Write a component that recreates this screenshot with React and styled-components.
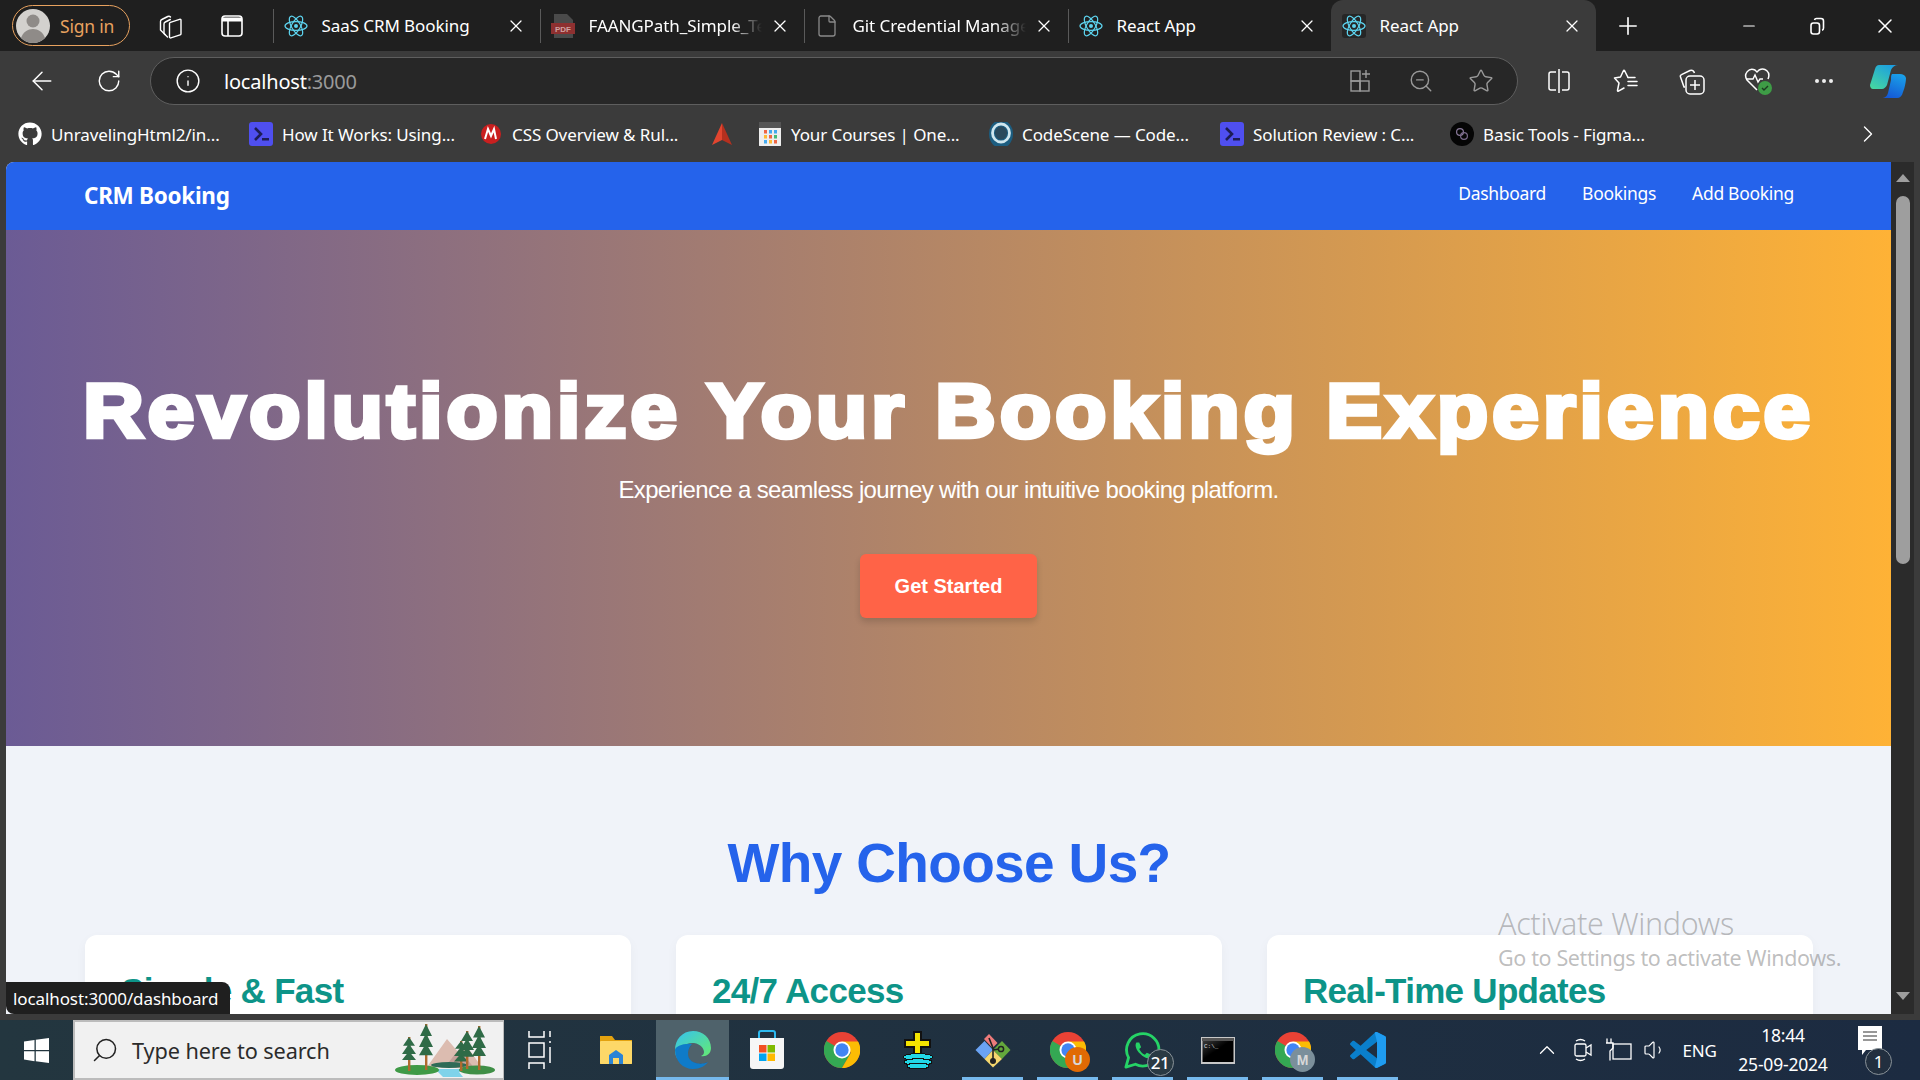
import React from "react";
import styled, { createGlobalStyle } from "styled-components";
import { ArrowLeft, RotateCw, Info, Star, ZoomOut, Plus, Minus, X, ChevronRight, ChevronUp, Search, Volume1, File } from "lucide-react";
import { FaGithub } from "react-icons/fa";

const Global = createGlobalStyle`
  html, body { margin: 0; padding: 0; width: 1920px; height: 1080px; overflow: hidden; background: #3b3b3b; }
  #root { width: 1920px; height: 1080px; }
  * { box-sizing: border-box; }
`;
const UI = `"Noto Sans", "Open Sans", sans-serif`;
const WEB = `"Liberation Sans", Arial, sans-serif`;

const Screen = styled.div`
  width: 1920px; height: 1080px; display: flex; flex-direction: column; font-family: ${UI}; color: #fff; overflow: hidden;
`;
const TabStrip = styled.div`
  height: 51px; background: #1f1f1f; display: flex; align-items: center; padding-left: 12px; flex: none;
`;
const SignIn = styled.div`
  width: 118px; height: 41px; border: 1.5px solid #e8a25f; border-radius: 21px; display: flex; align-items: center; gap: 10px;
  padding-left: 3px; color: #e8a25f; font-size: 17.5px; letter-spacing: -0.2px;
`;
const Avatar = styled.svg`width: 34px; height: 34px; flex: none;`;
const StripIcon = styled.div`
  width: 62px; height: 41px; display: flex; align-items: center; justify-content: center; flex: none;
  margin-left: ${p => p.$ml || 0}px;
`;
const TabsRow = styled.div`display: flex; height: 51px; align-items: center; margin-left: 10px;`;
const Tab = styled.div`
  width: ${p => p.$w || 264}px; height: ${p => p.$active ? 51 : 34}px; display: flex; align-items: center; padding: 0 14px 0 ${p => p.$active ? 11 : 10}px;
  border-left: ${p => p.$active ? "none" : "1px solid #5a5a5a"};
  background: ${p => p.$active ? "#3b3b3b" : "transparent"};
  border-radius: ${p => p.$active ? "12px 12px 0 0" : "0"};
  font-size: 17px; letter-spacing: -0.08px;
`;
const TabIcon = styled.div`
  width: 24px; height: 24px; flex: none; display: flex; align-items: center; justify-content: center; margin-right: 13.5px;
  background: ${p => p.$active ? "#262626" : "transparent"}; border-radius: 3px;
`;
const TabTitle = styled.div`
  flex: 1; white-space: nowrap; overflow: hidden; min-width: 0;
  ${p => p.$fade ? "-webkit-mask-image: linear-gradient(to right, #000 82%, transparent);" : ""}
`;
const TabClose = styled(X)`flex: none; margin-left: 8px;`;
const NewTab = styled.div`width: 64px; display: flex; justify-content: center; flex: none;`;
const WindowControls = styled.div`display: flex; margin-left: auto; flex: none; padding-right: 1px;`;
const WinBtn = styled.div`width: 68px; height: 51px; display: flex; align-items: center; justify-content: center;`;

const Toolbar = styled.div`
  height: 60px; background: #3b3b3b; display: flex; align-items: center; flex: none; padding-left: 8px;
`;
const NavBtn = styled.div`width: 67px; height: 44px; display: flex; align-items: center; justify-content: center; flex: none;`;
const Address = styled.div`
  width: 1368px; height: 48px; margin-left: 8px; background: #272727; border: 1.5px solid #5e5e5e; border-radius: 24px; display: flex; align-items: center;
  padding-left: 24px; flex: none;
`;
const UrlHost = styled.span`font-size: 20px; margin-left: 23px; letter-spacing: -0.2px;`;
const UrlPort = styled.span`font-size: 20px; color: #9a9a9a; letter-spacing: -0.2px;`;
const AddressIcons = styled.div`margin-left: auto; display: flex; padding-right: 6px;`;
const AddrIcon = styled.div`width: 60px; height: 40px; display: flex; align-items: center; justify-content: center;`;
const ToolIcons = styled.div`display: flex; flex: none; margin-left: 8px;`;
const ToolIcon = styled.div`width: ${p => p.$w || 66.5}px; height: 44px; display: flex; align-items: center; justify-content: center;`;

const Bookmarks = styled.div`
  height: 51px; background: #3b3b3b; display: flex; align-items: center; padding: 0 0 5px 18px; flex: none; font-size: 17px; letter-spacing: -0.1px;
`;
const Bookmark = styled.div`
  display: flex; align-items: center; width: ${p => p.$w}px; flex: none; white-space: nowrap; overflow: hidden;
`;
const BmIcon = styled.div`
  width: 24px; height: 24px; margin-right: 9px; flex: none; display: flex; align-items: center; justify-content: center;
`;
const BmMore = styled.div`margin-left: auto; margin-right: 38px; display: flex;`;

const Viewport = styled.div`flex: 1; min-height: 0; display: flex; padding-left: 6px; background: #3b3b3b; position: relative; padding-bottom: 6px;`;
const PageArea = styled.div`
  flex: 1; min-width: 0; height: 852px; overflow: hidden; background: #f0f3f9; font-family: ${WEB}; border-top-left-radius: 8px;
`;
const TopNav = styled.nav`
  height: 68px; background: #2563eb; display: flex; align-items: flex-start; justify-content: space-between; padding: 0 97px 0 78px;
`;
const Brand = styled.div`font-family: ${UI}; font-weight: 700; font-size: 22.5px; letter-spacing: -0.3px; margin-top: 18px;`;
const NavLinks = styled.div`display: flex; gap: 36px; margin-top: 19px;`;
const NavLink = styled.a`font-family: ${UI}; font-size: 17.5px; color: #fff; letter-spacing: -0.3px;`;
const Hero = styled.section`
  height: 516px; background: linear-gradient(90deg, #6b5b95, #feb236); display: flex; flex-direction: column; align-items: center; padding-top: 135px; color: #fff;
`;
const HeroTitle = styled.h1`
  margin: 0; font-size: 76px; line-height: 92px; font-weight: 700; letter-spacing: 3.8px; white-space: nowrap;
  -webkit-text-stroke: 4.5px #fff; transform: scaleX(1.1);
`;
const HeroSub = styled.p`margin: 19px 0 0; font-size: 24px; line-height: 28px; letter-spacing: -0.65px;`;
const CTA = styled.a`
  margin-top: 50px; width: 177px; height: 64px; background: #ff6347; color: #fff; border-radius: 6px; display: flex; align-items: center; justify-content: center;
  font-size: 20px; font-weight: 700; box-shadow: 0 4px 6px rgba(0,0,0,.15);
`;
const Features = styled.section`padding: 85px 78px 0 79px; display: flex; flex-direction: column; align-items: center;`;
const FeaturesTitle = styled.h2`margin: 0; font-size: 55px; line-height: 64px; color: #2563eb; font-weight: 700; letter-spacing: -0.65px;`;
const CardGrid = styled.div`display: grid; grid-template-columns: repeat(3, 1fr); gap: 45px; width: 100%; margin-top: 40px;`;
const Card = styled.div`background: #fff; border-radius: 12px; padding: 35px 36px; height: 200px; box-shadow: 0 4px 12px rgba(0,0,0,.04);`;
const CardTitle = styled.h3`margin: 0; font-size: 35px; line-height: 42px; color: #0d9488; font-weight: 700; white-space: nowrap; letter-spacing: -0.7px;`;

const Scrollbar = styled.div`width: 23px; margin-right: 6px; height: 852px; background: #2b2b2b; display: flex; flex-direction: column; align-items: center; padding-top: 12px; flex: none;`;
const ScrollThumb = styled.div`width: 14px; height: 368px; background: #9e9e9e; border-radius: 7px; margin-top: 14px;`;
const ArrowUp = styled.div`width: 0; height: 0; border-left: 7px solid transparent; border-right: 7px solid transparent; border-bottom: 8px solid #9e9e9e;`;
const ArrowDown = styled.div`width: 0; height: 0; border-left: 7px solid transparent; border-right: 7px solid transparent; border-top: 8px solid #9e9e9e; margin-top: auto; margin-bottom: 14px;`;

const StatusBubble = styled.div`
  position: absolute; left: 6px; bottom: 6px; height: 32px; width: 224px; background: #1f1f1f; border-radius: 0 8px 0 8px; font-size: 17px; letter-spacing: -0.1px;
  display: flex; align-items: center; padding-left: 7px;
`;
const Watermark = styled.div`position: absolute; left: 1498px; top: 743px; color: rgba(110,110,110,.45); pointer-events: none;`;
const WmTitle = styled.div`font-size: 30.5px; line-height: 36px; letter-spacing: -0.35px; font-weight: 300;`;
const WmSub = styled.div`font-size: 21.5px; line-height: 28px; letter-spacing: -0.37px; margin-top: 3px;`;

const Taskbar = styled.div`
  height: 60px; flex: none; display: flex; align-items: center; background: linear-gradient(90deg, #23363f, #1c2b41);
`;
const StartBtn = styled.div`width: 73px; height: 60px; display: flex; align-items: center; justify-content: center; flex: none;`;
const SearchBox = styled.div`
  width: 431px; height: 60px; background: #f1f1f1; border: 2px solid #bcbcbc; border-right-width: 1px; display: flex; align-items: center; padding-left: 16px; color: #2b2b2b; font-size: 21.7px; position: relative; flex: none;
`;
const SearchIcon = styled(Search)`transform: scaleX(-1); flex: none;`;
const SearchText = styled.span`margin-left: 13px; letter-spacing: -0.1px;`;
const Apps = styled.div`display: flex; flex: none;`;
const AppSlot = styled.div`
  width: ${p => p.$w || 75}px; height: 60px; display: flex; align-items: center; justify-content: center; flex: none; position: relative;
  background: ${p => p.$active ? "#4f626b" : "transparent"};
`;
const Underline = styled.div`position: absolute; left: ${p => p.$active ? 0 : 7}px; right: ${p => p.$active ? 0 : 7}px; bottom: 0; height: 3.5px; background: #76b9ed;`;
const Badge = styled.div`
  position: absolute; right: 6.5px; bottom: 4px; width: 27px; height: 27px; border-radius: 50%; background: #2a3a44; border: 1.5px solid #8a9399; font-size: 17px; font-weight: 500; display: flex; align-items: center; justify-content: center; letter-spacing: -0.5px;
`;
const ProfileBadge = styled.div`
  position: absolute; right: 15px; bottom: 8px; width: 25px; height: 25px; border-radius: 50%; background: ${p => p.$c}; color: #d8d8d8; font-family: ${WEB}; font-weight: 700; font-size: 14px; display: flex; align-items: center; justify-content: center;
`;
const Tray = styled.div`margin-left: auto; display: flex; align-items: center; flex: none; height: 60px; padding-right: 30px;`;
const TrayIcon = styled.div`width: 36px; display: flex; justify-content: center;`;
const Lang = styled.div`font-size: 17px; width: 53px; text-align: center; letter-spacing: -0.2px;`;
const Clock = styled.div`width: 114px; text-align: center; font-size: 17.5px; line-height: 29px; letter-spacing: -0.2px;`;
const Notify = styled.div`width: 40px; height: 50px; position: relative; display: flex; justify-content: center; margin-left: 10px;`;
const NotifyBadge = styled.div`
  position: absolute; right: -2px; bottom: 0; width: 27px; height: 27px; border-radius: 50%; background: #222f3f; border: 1.5px solid #8a9399; font-size: 17px; display: flex; align-items: center; justify-content: center;
`;

const ReactIcon = ({ color = "#5dd3ee" }) => (
  <svg width="24" height="24" viewBox="0 0 24 24" fill="none" stroke={color} strokeWidth="1.2">
    <circle cx="12" cy="12" r="2" fill={color} stroke="none" />
    <ellipse cx="12" cy="12" rx="11" ry="4.4" />
    <ellipse cx="12" cy="12" rx="11" ry="4.4" transform="rotate(60 12 12)" />
    <ellipse cx="12" cy="12" rx="11" ry="4.4" transform="rotate(120 12 12)" />
  </svg>
);
const PdfIcon = () => (
  <svg width="24" height="26" viewBox="0 0 24 26">
    <path d="M3 1h13l6 6v18H3z" fill="#4a4a4a" />
    <rect x="0" y="10" width="24" height="11" fill="#8e3030" />
    <text x="12" y="18.500" textAnchor="middle" fontSize="8" fontWeight="700" fill="#d0a0a0" fontFamily="Liberation Sans">PDF</text>
  </svg>
);
const Terminal = () => (
  <svg width="24" height="24" viewBox="0 0 24 24">
    <rect width="24" height="24" rx="3" fill="#4f4ff0" />
    <path d="M6 6l6 6-6 6" fill="none" stroke="#1d1d55" strokeWidth="2.600" />
    <rect x="13" y="16" width="7" height="2.500" fill="#1d1d55" />
  </svg>
);
const MIcon = () => (
  <svg width="22" height="22" viewBox="0 0 22 22">
    <circle cx="11" cy="11" r="10" fill="#c91f1f" />
    <path d="M5 16l3-10 3 7 3-7 2 10" fill="none" stroke="#fff" strokeWidth="2" />
  </svg>
);
const TriIcon = () => (
  <svg width="24" height="24" viewBox="0 0 24 24">
    <path d="M12 1L2 23l10-5z" fill="#e2452f" />
    <path d="M12 1l10 22-10-5z" fill="#b5301f" />
  </svg>
);
const CalIcon = () => (
  <svg width="24" height="28" viewBox="0 0 24 28">
    <rect x="1" y="2" width="22" height="25" rx="2" fill="#eee" />
    <rect x="1" y="2" width="22" height="6" fill="#555" />
    {[[6,10,"#e64"],[11,10,"#4ae"],[16,10,"#4ae"],[6,15,"#fb3"],[11,15,"#e64"],[16,15,"#4b7"],[6,20,"#4ae"],[11,20,"#fb3"],[16,20,"#e64"]].map(([x,y,c],i)=><rect key={i} x={x} y={y} width="3" height="3.500" fill={c}/>)}
  </svg>
);
const CodeScene = () => (
  <svg width="24" height="28" viewBox="0 0 24 28">
    <ellipse cx="12" cy="14" rx="12" ry="14" fill="#1c5d80" />
    <ellipse cx="12" cy="13" rx="8.500" ry="9" fill="none" stroke="#cfe6ee" strokeWidth="2.800" />
    <ellipse cx="12" cy="13" rx="6" ry="6.500" fill="#29495c" />
  </svg>
);
const FigmaRound = () => (
  <svg width="24" height="24" viewBox="0 0 24 24">
    <circle cx="12" cy="12" r="12" fill="#050505" />
    <circle cx="10" cy="10" r="3.400" fill="none" stroke="#8a7a9a" strokeWidth="1.200" />
    <circle cx="14" cy="14" r="3.400" fill="none" stroke="#7a6a8a" strokeWidth="1.200" />
  </svg>
);
const WinLogo = () => (
  <svg width="25" height="25" viewBox="0 0 25 25" fill="#fff">
    <path d="M0 3.600L10.500 2v10H0zM11.800 1.800L25 0v12H11.800zM0 13.200h10.500v10L0 21.600zM11.800 13.200H25V25l-13.200-1.800z" />
  </svg>
);
const EdgeLogo = () => (
  <svg width="38" height="40" viewBox="0 0 38 40">
    <defs>
      <linearGradient id="eg1" x1="0" y1="0" x2="1" y2="1"><stop offset="0" stopColor="#35c1f1" /><stop offset="1" stopColor="#66eb6e" /></linearGradient>
      <linearGradient id="eg2" x1="0" y1="0" x2="1" y2="1"><stop offset="0" stopColor="#0c59a4" /><stop offset="1" stopColor="#114a8b" /></linearGradient>
    </defs>
    <path d="M19 1C8 1 1 10 1 20c0 3 .7 6 2 8C5 18 12 12 20 13c7 1 10 6 10 9 0 2-1 3-3 4 5 1 10-2 10-8C37 8 29 1 19 1z" fill="url(#eg1)" />
    <path d="M1 20c0 11 8 19 18 19 7 0 12-3 15-7-6 3-16 2-19-4-2-4-1-10 3-14C9 13 1 17 1 20z" fill="#0f7bc9" />
    <path d="M15 28c3 6 13 7 19 4l-3 1c-8 2-17-1-17-9 0-3 1-6 4-9-4 3-5 9-3 13z" fill="url(#eg2)" />
  </svg>
);
const ChromeLogo = () => (
  <svg width="36" height="36" viewBox="0 0 38 38">
    <circle cx="19" cy="19" r="19" fill="#e94235" />
    <path d="M19 19L2.500 9.500A19 19 0 0 0 19 38l9.500-16z" fill="#34a853" />
    <path d="M19 10h17a19 19 0 0 1-17 28l9.500-16z" fill="#fbbc04" />
    <circle cx="19" cy="19" r="9" fill="#fff" />
    <circle cx="19" cy="19" r="7" fill="#4285f4" />
  </svg>
);
const Folder = () => (
  <svg width="34" height="34" viewBox="0 0 34 34">
    <path d="M1 3h12l3 4h17v24H1z" fill="#e3a20f" />
    <rect x="1" y="8" width="32" height="23" rx="1" fill="#fdd868" />
    <path d="M10 31v-9l7-5 7 5v9h-4v-6h-6v6z" fill="#2b84d6" />
  </svg>
);
const Store = () => (
  <svg width="36" height="40" viewBox="0 0 36 40">
    <path d="M10 8V3a2 2 0 0 1 2-2h12a2 2 0 0 1 2 2v5" fill="none" stroke="#2dbaf0" strokeWidth="2" />
    <path d="M1 8h34v28a3 3 0 0 1-3 3H4a3 3 0 0 1-3-3z" fill="#f6f6f6" />
    <rect x="10" y="15" width="7.500" height="7.500" fill="#f25022" /><rect x="18.500" y="15" width="7.500" height="7.500" fill="#7fba00" />
    <rect x="10" y="23.500" width="7.500" height="7.500" fill="#00a4ef" /><rect x="18.500" y="23.500" width="7.500" height="7.500" fill="#ffb900" />
  </svg>
);
const PixelApp = () => (
  <svg width="34" height="40" viewBox="0 0 34 40" shapeRendering="crispEdges">
    <path d="M13 2h7v8h9v7h-9v8h-7v-8H4v-7h9z" fill="#f4e400" stroke="#111" strokeWidth="1.400" />
    <ellipse cx="17" cy="27" rx="15" ry="3.400" fill="#22d7e6" stroke="#111" />
    <ellipse cx="17" cy="32" rx="14" ry="3.200" fill="#22d7e6" stroke="#111" />
    <ellipse cx="17" cy="36" rx="11" ry="3" fill="#22d7e6" stroke="#111" />
  </svg>
);
const GitDiamond = () => (
  <svg width="36" height="36" viewBox="0 0 36 36" strokeLinejoin="round">
    <path d="M.5 18L9.500 9l8.500 9-8.500 9z" fill="#6aa3f4" />
    <path d="M18 18l9-9 8.500 9-8.500 9z" fill="#64a83c" />
    <path d="M9.500 27L18 18l9 9-9 8.500z" fill="#f5d76e" />
    <path d="M9 7l5-5 8.500 9-5 5z" fill="#ee7b7b" />
    <path d="M18 16v12M14 6l4 10M24 17l-6 1" stroke="#222" strokeWidth="1.600" />
    <circle cx="18" cy="29" r="3" fill="#222" /><circle cx="26" cy="17" r="2.600" fill="none" stroke="#222" strokeWidth="1.500" />
  </svg>
);
const WhatsApp = () => (
  <svg width="38" height="38" viewBox="0 0 40 40" fill="none">
    <path d="M2 38l2.800-10A17 17 0 1 1 12 35z" stroke="#25d366" strokeWidth="3" strokeLinejoin="round" />
    <path d="M13 12c-2 3 0 8 4 12s8 6 11 4l1-3-5-2-2 2c-3-1-5-4-6-6l2-2-2-5z" fill="#25d366" />
  </svg>
);
const Cmd = () => (
  <svg width="34" height="27" viewBox="0 0 34 27">
    <defs><linearGradient id="cm" x1="0" y1="0" x2="1" y2="1"><stop offset="0" stopColor="#3a3a3a" /><stop offset=".45" stopColor="#000" /></linearGradient></defs>
    <rect width="34" height="27" fill="#c8c8c8" />
    <rect x="1" y="1" width="32" height="3" fill="#555" />
    <rect x="1.500" y="4" width="31" height="21" fill="url(#cm)" />
    <text x="3" y="11" fontSize="6" fill="#ddd" fontFamily="Liberation Mono">C:\_</text>
  </svg>
);
const VSCode = () => (
  <svg width="36" height="36" viewBox="0 0 100 100">
    <path fill="#0a7fcb" fillRule="evenodd" d="M70.900 99.300c1.600.6 3.400.6 5-.2l20.600-9.900c2.100-1 3.500-3.200 3.500-5.600V16.400c0-2.400-1.400-4.600-3.500-5.600L75.900.9c-2.100-1-4.500-.8-6.400.5-.3.200-.5.400-.7.700L29.400 38 12.200 25c-1.600-1.200-3.800-1.100-5.300.2L1.400 30.300c-1.800 1.600-1.800 4.500 0 6.100L16.200 50 1.400 63.600c-1.800 1.600-1.800 4.500 0 6.100l5.500 5c1.500 1.400 3.700 1.500 5.300.3L29.400 62l39.400 35.900c.6.600 1.300 1.100 2.100 1.400zM75 27.300L45.100 50 75 72.700z" />
    <path fill="#1f9cf0" d="M70.900 99.300c1.600.6 3.400.6 5-.2l20.600-9.900c2.100-1 3.500-3.200 3.500-5.600V16.400c0-2.400-1.400-4.600-3.500-5.600L75.900.9c-2.100-1-4.500-.8-6.400.5-.3.200-.5.400-.7.700L75 27.300v45.400L68.800 97.900c.6.600 1.300 1.100 2.100 1.400z" />
  </svg>
);
const Copilot = () => (
  <svg width="36" height="33" viewBox="0 0 36 33">
    <defs>
      <linearGradient id="cp1" x1="0.800" y1="0" x2="0.100" y2="1"><stop offset="0" stopColor="#1b9de2" /><stop offset="1" stopColor="#46d8a0" /></linearGradient>
      <linearGradient id="cp2" x1="0.700" y1="0" x2="0.300" y2="1"><stop offset="0" stopColor="#1aa0e8" /><stop offset="1" stopColor="#1458d6" /></linearGradient>
    </defs>
    <path d="M9 0h19c-3 0-6 2-7 5l-4 15c-1 2-3 4-5 4H3c-2 0-3-2-3-4L5 4c1-3 2-4 4-4z" fill="url(#cp1)" />
    <path d="M22 9h8c3 0 5 1 6 4 0 3-1 9-3 14-1 4-3 6-6 6H12c2 0 5-1 6-5l3-13c0-3 0-5 1-6z" fill="url(#cp2)" />
  </svg>
);
const Collections = () => (
  <svg width="26" height="26" viewBox="0 0 26 26" fill="none" stroke="#fff" strokeWidth="1.400" strokeLinejoin="round" strokeLinecap="round">
    <path d="M8 21.500L3.500 17V8.500c0-1 .4-1.600 1.300-2l6-3c1-.5 2-.3 2.700.5" />
    <path d="M10.500 24L7 20.500V11c0-1 .4-1.600 1.300-2l5-2.500" />
    <path d="M12.500 10.500c0-.6.300-1 .9-1.200l9.200-3c.7-.2 1.400.2 1.400 1v13.400c0 .6-.3 1-.9 1.200l-9.200 3c-.7.2-1.400-.2-1.400-1z" />
  </svg>
);
const TabPanel = () => (
  <svg width="22" height="22" viewBox="0 0 22 22" fill="none" stroke="#fff" strokeWidth="1.600">
    <rect x="1" y="1" width="20" height="20" rx="3" />
    <path d="M1 4.500h20" strokeWidth="4" /><path d="M7 6v15" />
  </svg>
);
const Restore = () => (
  <svg width="16" height="18" viewBox="0 0 16 18" fill="none" stroke="#fff" strokeWidth="1.600">
    <rect x="2" y="6" width="8.500" height="11" rx="2.400" /><path d="M5.500 3A2 2 0 0 1 7.500 1.500h4.500A2.500 2.500 0 0 1 14.500 4v7c0 1-.6 2-1.500 2.200" />
  </svg>
);
const AppsAdd = () => (
  <svg width="22" height="24" viewBox="0 0 22 24" fill="none" stroke="#9a9a9a" strokeWidth="1.400">
    <rect x="1" y="2" width="9" height="10" /><rect x="1" y="12" width="9" height="10" /><rect x="10" y="12" width="9" height="10" />
    <path d="M16 1v8M12 5h8" />
  </svg>
);
const Split = () => (
  <svg width="24" height="26" viewBox="0 0 24 26" fill="none" stroke="#fff" strokeWidth="1.500">
    <path d="M12 1v24M9 4H4a2 2 0 0 0-2 2v14a2 2 0 0 0 2 2h5M15 4h5a2 2 0 0 1 2 2v14a2 2 0 0 1-2 2h-5" />
  </svg>
);
const Favorites = () => (
  <svg width="26" height="26" viewBox="0 0 26 26" fill="none" stroke="#fff" strokeWidth="1.500" strokeLinejoin="round" strokeLinecap="round">
    <path d="M15 9.500L11.500 2.500c-.3-.5-.8-.5-1 0L7.500 9 1.500 10l4.500 5-1.500 7.500c-.1.500.4.900.9.600L11 20" />
    <path d="M15 9.500h7M15 13.500h9M15 17.500h9" />
  </svg>
);
const CollAdd = () => (
  <svg width="26" height="28" viewBox="0 0 26 28" fill="none" stroke="#fff" strokeWidth="1.500" strokeLinejoin="round">
    <path d="M6 20H5L1.500 10c-.4-1 .1-2 1-2.400L11 3.500c2-.8 3.500 0 4.500 2.500" />
    <rect x="7" y="9" width="18" height="18" rx="4" /><path d="M16 13v10M11 18h10" />
  </svg>
);
const Health = () => (
  <svg width="30" height="30" viewBox="0 0 30 30" fill="none">
    <path d="M13 24L3 14C-1 8 5 1 11 4l2 2 2-2c6-3 12 2 9 9" stroke="#fff" strokeWidth="1.500" />
    <path d="M2 13h7l2-4 3 7 2-3h3" stroke="#fff" strokeWidth="1.400" />
    <circle cx="21" cy="22" r="7" fill="#3e9c46" /><path d="M18 22l2 2 4-4" stroke="#1c3a20" strokeWidth="1.400" />
  </svg>
);
const Forest = () => (
  <svg width="100" height="56" viewBox="0 0 100 56" style={{ position: "absolute", right: 8, top: 1 }}>
    <path d="M32 44L52 16l12 14 7-8 17 24z" fill="#dcbcb0" /><path d="M50 44l14-18 16 20z" fill="#c49f98" />
    <path d="M40 46h34l-10 3 4 5H48z" fill="#7fd3ea" />
    <ellipse cx="22" cy="47" rx="22" ry="5" fill="#3f9a46" /><ellipse cx="82" cy="47" rx="18" ry="4.500" fill="#3f8f46" />
    <ellipse cx="54" cy="42" rx="18" ry="3" fill="#2f6b57" />
    {[[10,14,34],[27,1,46],[62,18,30],[68,8,38],[80,3,44]].map(([x,y,h],i)=>(
      <g key={i}>
        <rect x={x+3} y={y} width="2.400" height={h} fill="#b06a2e" />
        <path d={`M${x+4} ${y}l6 ${h*.26}h-12zM${x+4} ${y+h*.2}l7 ${h*.3}h-14zM${x+4} ${y+h*.42}l7 ${h*.26}h-14z`} fill="#2f6b47" />
      </g>
    ))}
  </svg>
);
const Camera = () => (
  <svg width="20" height="26" viewBox="0 0 20 26" fill="none" stroke="#fff" strokeWidth="1.300">
    <rect x="2" y="7" width="11" height="12" rx="1.500" /><path d="M13 11l5-3v10l-5-3M3 4c3-2 6-2 9 0M3 22c3 2 6 2 9 0" />
  </svg>
);
const Network = () => (
  <svg width="26" height="24" viewBox="0 0 26 24" fill="none" stroke="#fff" strokeWidth="1.300">
    <rect x="7" y="6" width="18" height="15" /><path d="M1 1v4M5 1v4M0 5h7v5l-3 3v9" strokeLinecap="round" />
  </svg>
);
const NotifyGlyph = () => (
  <svg width="24" height="34" viewBox="0 0 24 34">
    <path d="M0 1h24v24H8l-4 5v-5H0z" fill="#fff" />
    <path d="M5 7h14M5 11h14M5 15h14" stroke="#333" strokeWidth="1.200" />
  </svg>
);
const TaskView = () => (
  <svg width="26" height="42" viewBox="0 0 26 42" fill="none" stroke="#fff" strokeWidth="1.500">
    <path d="M2 2v6h15V2M2 40v-6h15v6M2 14h15v14H2zM23 2v6M23 12v2M23 18v16" />
  </svg>
);

const tabs = [
  { t: "SaaS CRM Booking", i: <ReactIcon />, w: 267 },
  { t: "FAANGPath_Simple_Template", i: <PdfIcon />, fade: true },
  { t: "Git Credential Manager", i: <File size={24} color="#8a8a8a" strokeWidth={1.3} />, fade: true },
  { t: "React App", i: <ReactIcon />, w: 263 },
  { t: "React App", i: <ReactIcon />, active: true, w: 265 },
];
const marks = [
  { t: "UnravelingHtml2/in...", i: <FaGithub size={24} color="#fff" />, w: 231 },
  { t: "How It Works: Using...", i: <Terminal />, w: 230 },
  { t: "CSS Overview & Rul...", i: <MIcon />, w: 231 },
  { t: "", i: <TriIcon />, w: 48 },
  { t: "Your Courses | One...", i: <CalIcon />, w: 231 },
  { t: "CodeScene — Code...", i: <CodeScene />, w: 231 },
  { t: "Solution Review : C...", i: <Terminal />, w: 230 },
  { t: "Basic Tools - Figma...", i: <FigmaRound />, w: 200 },
];

export default function App() {
  return (
    <Screen>
      <Global />
      <TabStrip>
        <SignIn>
          <Avatar viewBox="0 0 34 34">
            <circle cx="17" cy="17" r="17" fill="#d3d1ce" />
            <circle cx="17" cy="12" r="6.500" fill="#8f8b88" />
            <path d="M5 29c2-6 7-9 12-9s10 3 12 9a17 17 0 0 1-24 0z" fill="#8f8b88" />
          </Avatar>
          Sign in
        </SignIn>
        <StripIcon $ml={9}><Collections /></StripIcon>
        <StripIcon><TabPanel /></StripIcon>
        <TabsRow>
          {tabs.map((x, i) => (
            <Tab key={i} $w={x.w} $active={x.active}>
              <TabIcon $active={x.active}>{x.i}</TabIcon>
              <TabTitle $fade={x.fade}>{x.t}</TabTitle>
              <TabClose size={20} color="#fff" strokeWidth={1.5} />
            </Tab>
          ))}
        </TabsRow>
        <NewTab><Plus size={28} color="#fff" strokeWidth={1.4} /></NewTab>
        <WindowControls>
          <WinBtn><Minus size={18} color="#fff" strokeWidth={1.6} /></WinBtn>
          <WinBtn><Restore /></WinBtn>
          <WinBtn><X size={24} color="#fff" strokeWidth={1.5} /></WinBtn>
        </WindowControls>
      </TabStrip>
      <Toolbar>
        <NavBtn><ArrowLeft size={30} color="#fff" strokeWidth={1.2} /></NavBtn>
        <NavBtn><RotateCw size={26} color="#fff" strokeWidth={1.3} /></NavBtn>
        <Address>
          <Info size={26} color="#fff" strokeWidth={1.3} />
          <UrlHost>localhost</UrlHost><UrlPort>:3000</UrlPort>
          <AddressIcons>
            <AddrIcon><AppsAdd /></AddrIcon>
            <AddrIcon><ZoomOut size={26} color="#9a9a9a" strokeWidth={1.3} /></AddrIcon>
            <AddrIcon><Star size={26} color="#9a9a9a" strokeWidth={1.3} /></AddrIcon>
          </AddressIcons>
        </Address>
        <ToolIcons>
          <ToolIcon><Split /></ToolIcon>
          <ToolIcon><Favorites /></ToolIcon>
          <ToolIcon><CollAdd /></ToolIcon>
          <ToolIcon><Health /></ToolIcon>
          <ToolIcon $w={64}><svg width="20" height="6" fill="#eee"><circle cx="3" cy="3" r="2" /><circle cx="10" cy="3" r="2" /><circle cx="17" cy="3" r="2" /></svg></ToolIcon>
          <ToolIcon $w={64}><Copilot /></ToolIcon>
        </ToolIcons>
      </Toolbar>
      <Bookmarks>
        {marks.map((m, i) => (
          <Bookmark key={i} $w={m.w}><BmIcon>{m.i}</BmIcon>{m.t}</Bookmark>
        ))}
        <BmMore><ChevronRight size={28} color="#fff" strokeWidth={1.2} /></BmMore>
      </Bookmarks>
      <Viewport>
        <PageArea>
          <TopNav>
            <Brand>CRM Booking</Brand>
            <NavLinks>
              <NavLink>Dashboard</NavLink>
              <NavLink>Bookings</NavLink>
              <NavLink>Add Booking</NavLink>
            </NavLinks>
          </TopNav>
          <Hero>
            <HeroTitle>Revolutionize Your Booking Experience</HeroTitle>
            <HeroSub>Experience a seamless journey with our intuitive booking platform.</HeroSub>
            <CTA>Get Started</CTA>
          </Hero>
          <Features>
            <FeaturesTitle>Why Choose Us?</FeaturesTitle>
            <CardGrid>
              <Card><CardTitle>Simple &amp; Fast</CardTitle></Card>
              <Card><CardTitle>24/7 Access</CardTitle></Card>
              <Card><CardTitle>Real-Time Updates</CardTitle></Card>
            </CardGrid>
          </Features>
        </PageArea>
        <Scrollbar>
          <ArrowUp />
          <ScrollThumb />
          <ArrowDown />
        </Scrollbar>
        <StatusBubble>localhost:3000/dashboard</StatusBubble>
        <Watermark>
          <WmTitle>Activate Windows</WmTitle>
          <WmSub>Go to Settings to activate Windows.</WmSub>
        </Watermark>
      </Viewport>
      <Taskbar>
        <StartBtn><WinLogo /></StartBtn>
        <SearchBox>
          <SearchIcon size={28} color="#222" strokeWidth={1.3} />
          <SearchText>Type here to search</SearchText>
          <Forest />
        </SearchBox>
        <Apps>
          <AppSlot $w={72}><TaskView /></AppSlot>
          <AppSlot $w={80}><Folder /></AppSlot>
          <AppSlot $active $w={73}><EdgeLogo /><Underline $active /></AppSlot>
          <AppSlot><Store /></AppSlot>
          <AppSlot $w={76}><ChromeLogo /></AppSlot>
          <AppSlot><PixelApp /></AppSlot>
          <AppSlot><GitDiamond /><Underline /></AppSlot>
          <AppSlot><ChromeLogo /><ProfileBadge $c="#e16a04">U</ProfileBadge><Underline /></AppSlot>
          <AppSlot><WhatsApp /><Badge>21</Badge><Underline /></AppSlot>
          <AppSlot><Cmd /><Underline /></AppSlot>
          <AppSlot><ChromeLogo /><ProfileBadge $c="#7b8f9b">M</ProfileBadge><Underline /></AppSlot>
          <AppSlot><VSCode /><Underline /></AppSlot>
        </Apps>
        <Tray>
          <TrayIcon><ChevronUp size={26} color="#fff" strokeWidth={1.2} /></TrayIcon>
          <TrayIcon><Camera /></TrayIcon>
          <TrayIcon><Network /></TrayIcon>
          <TrayIcon><Volume1 size={24} color="#fff" strokeWidth={1.2} /></TrayIcon>
          <Lang>ENG</Lang>
          <Clock>18:44<br />25-09-2024</Clock>
          <Notify><NotifyGlyph /><NotifyBadge>1</NotifyBadge></Notify>
        </Tray>
      </Taskbar>
    </Screen>
  );
}
